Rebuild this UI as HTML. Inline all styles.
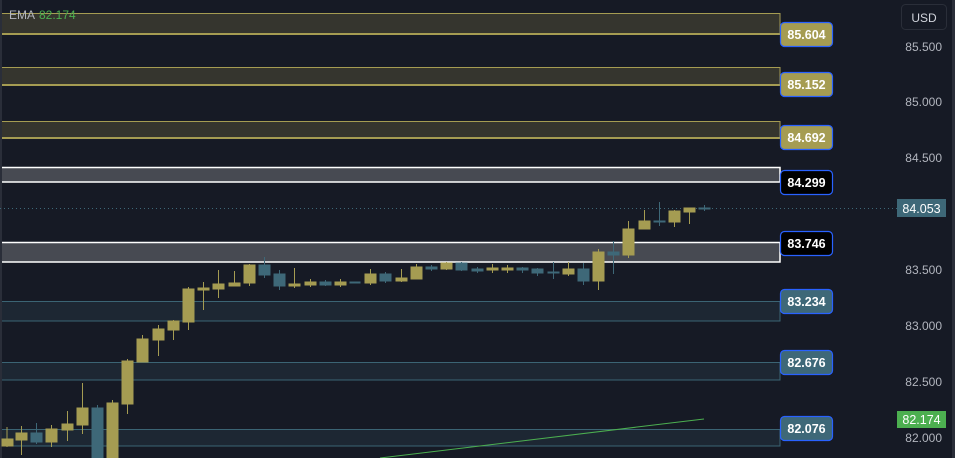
<!DOCTYPE html>
<html><head><meta charset="utf-8"><style>
html,body{margin:0;padding:0;background:#161a25;}
svg{display:block;font-family:"Liberation Sans",sans-serif;}
.ax{fill:#b2b5be;font-size:12px;}
.lb{font-size:12.5px;font-weight:bold;fill:#fff;}
</style></head><body>
<svg width="955" height="458" viewBox="0 0 955 458" xmlns="http://www.w3.org/2000/svg">
<rect width="955" height="458" fill="#161a25"/>
<!-- yellow zones -->
<g fill="#35352e" stroke="#a59c52">
<rect x="-2" y="13.5" width="782" height="20.5" stroke-width="1"/>
<rect x="-2" y="67.5" width="782" height="17.5"/>
<rect x="-2" y="121.5" width="782" height="17"/>
</g>
<g stroke="#a59c52" stroke-width="2"><line x1="0" y1="34" x2="780" y2="34"/><line x1="0" y1="85" x2="780" y2="85"/><line x1="0" y1="138" x2="780" y2="138"/></g>
<!-- gray zones -->
<g fill="#474a52" stroke="#ffffff" stroke-width="1.5">
<rect x="-3" y="167.5" width="783" height="14.5"/>
<rect x="-3" y="242.5" width="783" height="19.5"/>
</g>
<!-- blue zones -->
<g fill="#1d2733" stroke="#3b6474" stroke-width="1">
<rect x="-2" y="301.5" width="782" height="19.5"/>
<rect x="-2" y="362.5" width="782" height="17.5"/>
<rect x="-2" y="429.5" width="782" height="16.5"/>
</g>
<rect x="0" y="0" width="2" height="458" fill="#2a2e39"/>
<rect x="952" y="0" width="3" height="458" fill="#2a2e39"/>
<!-- dotted price line -->
<line x1="0" y1="208.5" x2="897" y2="208.5" stroke="#3e6878" stroke-width="1" stroke-dasharray="1,3"/>
<!-- EMA -->
<line x1="380" y1="458" x2="704" y2="419" stroke="#4caf50" stroke-width="1"/>
<!-- candles -->
<g stroke-width="1">
<g stroke="#a59c52" fill="#a59c52">
<line x1="7" y1="427" x2="7" y2="447"/><rect x="2" y="439" width="11" height="7"/>
<line x1="21.5" y1="426" x2="21.5" y2="455"/><rect x="16" y="433" width="11" height="7"/>
<line x1="51.5" y1="425" x2="51.5" y2="447"/><rect x="46" y="429" width="11" height="13"/>
<line x1="67.5" y1="411" x2="67.5" y2="441"/><rect x="62" y="424" width="11" height="6"/>
<line x1="82.5" y1="383" x2="82.5" y2="434"/><rect x="77" y="408" width="11" height="17"/>
<line x1="112.5" y1="400" x2="112.5" y2="458"/><rect x="107" y="403" width="11" height="55"/>
<line x1="127.5" y1="359" x2="127.5" y2="414"/><rect x="122" y="361" width="11" height="43"/>
<line x1="142.5" y1="335" x2="142.5" y2="362"/><rect x="137" y="339" width="11" height="23"/>
<line x1="158.5" y1="325" x2="158.5" y2="356"/><rect x="153" y="329" width="11" height="11"/>
<line x1="173.5" y1="320" x2="173.5" y2="340"/><rect x="168" y="321" width="11" height="9"/>
<line x1="188.5" y1="287" x2="188.5" y2="330"/><rect x="183" y="289" width="11" height="33"/>
<line x1="203.5" y1="282" x2="203.5" y2="310"/><rect x="198" y="288" width="11" height="2"/>
<line x1="218.5" y1="270" x2="218.5" y2="298"/><rect x="213" y="284" width="11" height="5"/>
<line x1="234.5" y1="271" x2="234.5" y2="286"/><rect x="229" y="283" width="11" height="3"/>
<line x1="249.5" y1="264" x2="249.5" y2="286"/><rect x="244" y="265" width="11" height="18"/>
<line x1="294.5" y1="268" x2="294.5" y2="288"/><rect x="289" y="284" width="11" height="2"/>
<line x1="310.5" y1="279" x2="310.5" y2="287"/><rect x="305" y="282" width="11" height="3"/>
<line x1="340.5" y1="279" x2="340.5" y2="287"/><rect x="335" y="282" width="11" height="3"/>
<line x1="370.5" y1="269" x2="370.5" y2="285"/><rect x="365" y="274" width="11" height="9"/>
<line x1="401.5" y1="269" x2="401.5" y2="282"/><rect x="396" y="278" width="11" height="3"/>
<line x1="416.5" y1="264" x2="416.5" y2="279"/><rect x="411" y="267" width="11" height="12"/>
<line x1="446.5" y1="262" x2="446.5" y2="270"/><rect x="441" y="263" width="11" height="6"/>
<line x1="492.5" y1="264" x2="492.5" y2="273"/><rect x="487" y="268" width="11" height="2"/>
<line x1="507.5" y1="265" x2="507.5" y2="273"/><rect x="502" y="268" width="11" height="2"/>
<line x1="568.5" y1="262" x2="568.5" y2="276"/><rect x="563" y="269" width="11" height="5"/>
<line x1="598.5" y1="249" x2="598.5" y2="290"/><rect x="593" y="252" width="11" height="29"/>
<line x1="628.5" y1="221" x2="628.5" y2="258"/><rect x="623" y="229" width="11" height="26"/>
<line x1="644.5" y1="210" x2="644.5" y2="229"/><rect x="639" y="221" width="11" height="8"/>
<line x1="674.5" y1="210" x2="674.5" y2="227"/><rect x="669" y="211" width="11" height="11"/>
<line x1="689.5" y1="208" x2="689.5" y2="224"/><rect x="684" y="208" width="11" height="4"/>
</g>
<g stroke="#3e6878" fill="#3e6878">
<line x1="36.5" y1="423" x2="36.5" y2="444"/><rect x="31" y="433" width="11" height="9"/>
<line x1="97.5" y1="405" x2="97.5" y2="458"/><rect x="92" y="408" width="11" height="50"/>
<line x1="264.5" y1="257" x2="264.5" y2="278"/><rect x="259" y="265" width="11" height="10"/>
<line x1="279.5" y1="270" x2="279.5" y2="290"/><rect x="274" y="274" width="11" height="12"/>
<line x1="325.5" y1="280" x2="325.5" y2="286"/><rect x="320" y="282" width="11" height="3"/>
<rect x="350" y="282" width="10" height="1"/>
<line x1="385.5" y1="272" x2="385.5" y2="283"/><rect x="380" y="274" width="11" height="7"/>
<line x1="431.5" y1="265" x2="431.5" y2="271"/><rect x="426" y="267" width="11" height="2"/>
<line x1="461.5" y1="262" x2="461.5" y2="271"/><rect x="456" y="263" width="11" height="7"/>
<line x1="477.5" y1="267" x2="477.5" y2="273"/><rect x="472" y="269" width="11" height="2"/>
<line x1="522.5" y1="267" x2="522.5" y2="273"/><rect x="517" y="268" width="11" height="2"/>
<line x1="537.5" y1="268" x2="537.5" y2="276"/><rect x="532" y="269" width="11" height="4"/>
<line x1="553.5" y1="262" x2="553.5" y2="279"/><rect x="548" y="272" width="11" height="1"/>
<line x1="583.5" y1="263" x2="583.5" y2="285"/><rect x="578" y="269" width="11" height="12"/>
<line x1="613.5" y1="241" x2="613.5" y2="274"/><rect x="608" y="252" width="11" height="3"/>
<line x1="659.5" y1="202" x2="659.5" y2="226"/><rect x="654" y="221" width="11" height="1"/>
<line x1="704.5" y1="205" x2="704.5" y2="211"/><rect x="699" y="208" width="11" height="1"/>
</g>
</g>
<!-- zone labels -->
<g stroke="#2962ff" stroke-width="1.2">
<rect x="780.5" y="22.5" width="52" height="24" rx="4" fill="#a59c52"/>
<rect x="780.5" y="72.5" width="52" height="24" rx="4" fill="#a59c52"/>
<rect x="780.5" y="125.5" width="52" height="24" rx="4" fill="#a59c52"/>
<rect x="780.5" y="170.5" width="52" height="24" rx="4" fill="#000"/>
<rect x="780.5" y="231.5" width="52" height="24" rx="4" fill="#000"/>
<rect x="780.5" y="289.5" width="52" height="24" rx="4" fill="#3e6878"/>
<rect x="780.5" y="350.5" width="52" height="24" rx="4" fill="#3e6878"/>
<rect x="780.5" y="416.5" width="52" height="24" rx="4" fill="#3e6878"/>
</g>
<g class="lb" text-anchor="middle">
<text x="806.5" y="39">85.604</text>
<text x="806.5" y="89">85.152</text>
<text x="806.5" y="142">84.692</text>
<text x="806.5" y="187">84.299</text>
<text x="806.5" y="248">83.746</text>
<text x="806.5" y="306">83.234</text>
<text x="806.5" y="367">82.676</text>
<text x="806.5" y="433">82.076</text>
</g>
<!-- axis -->
<rect x="901.5" y="4.5" width="45" height="25" rx="4" fill="#161a25" stroke="#2a2e39"/>
<text x="924" y="22" text-anchor="middle" font-size="12" fill="#d1d4dc">USD</text>
<g class="ax" text-anchor="end">
<text x="942" y="51">85.500</text>
<text x="942" y="106">85.000</text>
<text x="942" y="162">84.500</text>
<text x="942" y="274">83.500</text>
<text x="942" y="330">83.000</text>
<text x="942" y="386">82.500</text>
<text x="942" y="442">82.000</text>
</g>
<rect x="897" y="199" width="49" height="18" fill="#3e6878"/>
<text x="921.5" y="213" text-anchor="middle" font-size="12.5" fill="#fff">84.053</text>
<rect x="897" y="411" width="49" height="17" fill="#4caf50"/>
<text x="921.5" y="424" text-anchor="middle" font-size="12.5" fill="#fff">82.174</text>
<!-- legend -->
<text x="9" y="19" font-size="12" fill="#b2b5be">EMA</text>
<text x="39" y="19" font-size="12" fill="#4caf50">82.174</text>
</svg>
</body></html>
